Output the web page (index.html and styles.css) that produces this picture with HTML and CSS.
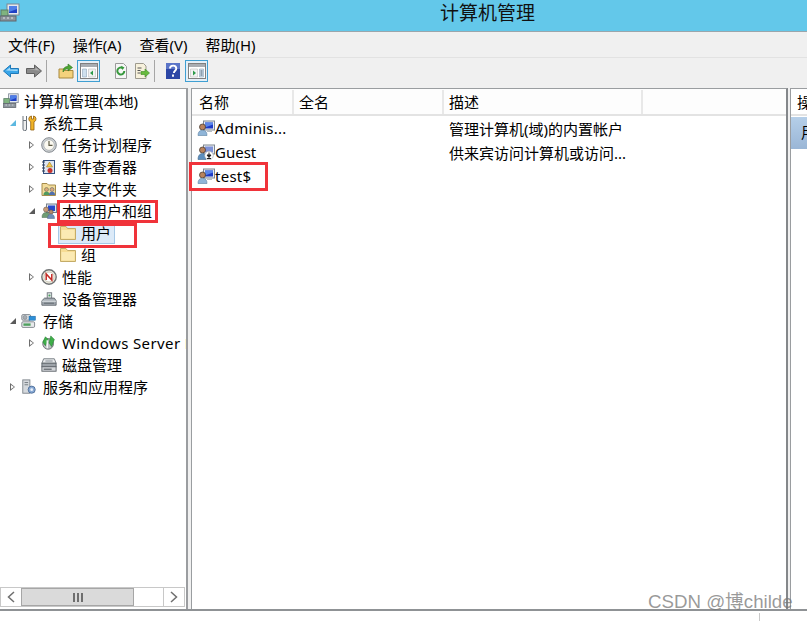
FILE: index.html
```html
<!DOCTYPE html>
<html lang="zh">
<head>
<meta charset="utf-8">
<title>计算机管理</title>
<link rel="stylesheet" href="styles.css">
</head>
<body>
<svg class="defs" width="0" height="0" aria-hidden="true">
  <defs>
    <symbol id="i-comp" viewBox="0 0 20 20">
      <rect x="7" y="1" width="12" height="11" fill="#e4e8ee" stroke="#7d8794"/>
      <rect x="9" y="3" width="8" height="7" fill="#1f3fc4"/>
      <path d="M9 3h8v3l-8 3z" fill="#4f7fe8"/>
      <rect x="1" y="7" width="7" height="6" fill="#7fb37f" stroke="#5c7f68"/>
      <rect x="0" y="13" width="16" height="5" fill="#8c949c" stroke="#5f666d"/>
      <path d="M3 15h2M7 15h2M11 15h2" stroke="#dfe3e6"/>
    </symbol>
    <symbol id="i-tools" viewBox="0 0 16 16">
      <path d="M2 1v4.500M5.500 1v4.500M2 5.500h3.500V14a1.750 1.750 0 0 1-3.500 0z" fill="#eeeeee" stroke="#6c747c"/>
      <path d="M10.500 1a3 3 0 0 0-.8 5.800V15h3.300V6.800A3 3 0 0 0 12.500 1v3h-2z" fill="#f0b429" stroke="#94600c" stroke-width=".8"/>
    </symbol>
    <symbol id="i-clock" viewBox="0 0 16 16">
      <circle cx="8" cy="8" r="7.300" fill="#cfd3d6" stroke="#858a8f"/>
      <circle cx="8" cy="8" r="5.300" fill="#fbf9f0" stroke="#a4a8ab" stroke-width=".7"/>
      <path d="M8 4v4.300h3.500" fill="none" stroke="#5e5a44" stroke-width="1.200"/>
    </symbol>
    <symbol id="i-event" viewBox="0 0 16 16">
      <rect x="2.500" y="1.500" width="11" height="13" fill="#dfe6f2" stroke="#33507f"/>
      <path d="M1 3h3M1 6h3M1 9h3M1 12h3" stroke="#333f55"/>
      <path d="M8.500 3l3 5h-6z" fill="#f5c84a" stroke="#9c7a1c" stroke-width=".6"/>
      <circle cx="9" cy="11.500" r="2.500" fill="#c8322d"/>
    </symbol>
    <symbol id="i-share" viewBox="0 0 16 16">
      <path d="M1 2.500h5l1.500 1.500h7v10.500h-13.500z" fill="#f3dc9a" stroke="#a48b4c"/>
      <circle cx="5.500" cy="8.500" r="2" fill="#d9a878" stroke="#54684f" stroke-width=".5"/>
      <path d="M2.500 14c0-2.500 1-3.300 3-3.300s3 .8 3 3.300z" fill="#4f9a5e"/>
      <circle cx="11" cy="8.500" r="2" fill="#d9a878" stroke="#41557e" stroke-width=".5"/>
      <path d="M8 14c0-2.500 1-3.300 3-3.300s3 .8 3 3.300z" fill="#4f6fae"/>
    </symbol>
    <symbol id="i-group" viewBox="0 0 16 16">
      <rect x="5.500" y="1" width="10" height="8.500" fill="#e2e6ec" stroke="#77808c"/>
      <rect x="7" y="2.500" width="7" height="5.500" fill="#2749cc"/>
      <circle cx="5" cy="6.500" r="2.500" fill="#c89a78" stroke="#5c4d3f" stroke-width=".5"/>
      <path d="M1 14.500c0-3.500 1.500-5 4-5s4 1.500 4 5z" fill="#6f9d73" stroke="#4d6b52" stroke-width=".5"/>
      <circle cx="10" cy="9" r="2.200" fill="#b58a6c" stroke="#4a3f37" stroke-width=".5"/>
      <path d="M6.500 15.500c0-3 1.300-4.300 3.500-4.300s3.500 1.300 3.500 4.300z" fill="#708db8" stroke="#4e6488" stroke-width=".5"/>
    </symbol>
    <symbol id="i-folder" viewBox="0 0 16 16">
      <path d="M.5 1.500h5.500l1.500 2h8v11h-15z" fill="#f6dc94" stroke="#c4ac68"/>
      <path d="M1.500 5h13v8.500h-13z" fill="#fbeab4"/>
    </symbol>
    <symbol id="i-perf" viewBox="0 0 16 16">
      <circle cx="8" cy="8" r="7.200" fill="#f0ede0" stroke="#6f7273" stroke-width="1.400"/>
      <circle cx="8" cy="8" r="5" fill="#fff" stroke="#b8b4a4" stroke-width=".7"/>
      <path d="M5.200 11V5l5.600 6V5" fill="none" stroke="#c42b25" stroke-width="1.500"/>
    </symbol>
    <symbol id="i-device" viewBox="0 0 18 16">
      <rect x="7" y="1" width="5" height="7" fill="#dfe3e6" stroke="#6f767c"/>
      <circle cx="9.500" cy="4" r="1.200" fill="#49a05c"/>
      <path d="M1 10l3-3h11l2 3v5h-16z" fill="#a9b0b7" stroke="#5c6369"/>
      <path d="M1 10.500h16" stroke="#e4e7e9"/>
      <rect x="3" y="12" width="12" height="1.500" fill="#6d747a"/>
    </symbol>
    <symbol id="i-storage" viewBox="0 0 20 18">
      <rect x="1" y="1" width="11" height="7" rx="1.500" fill="#dfe3e6" stroke="#6d747b"/>
      <circle cx="5" cy="4.500" r="2.500" fill="#a8adb2" stroke="#6d747b" stroke-width=".6"/>
      <rect x="10" y="3" width="8" height="5" fill="#2d8fd8" stroke="#1b6098" stroke-width=".6"/>
      <rect x="1" y="10" width="16" height="7" rx="1.500" fill="#e8eaec" stroke="#6d747b"/>
      <rect x="3" y="12" width="9" height="3" fill="#4fa05e"/>
    </symbol>
    <symbol id="i-wsb" viewBox="0 0 18 18">
      <circle cx="8" cy="10" r="6" fill="#b9bcc0" stroke="#6c6f73"/>
      <path d="M5 2l3 3-3 7-3-4zM11 1l4 4-3 8-3-4z" fill="#3fae49" stroke="#1d7a2c" stroke-width=".6"/>
      <path d="M7 6v9" stroke="#fff" stroke-width="1.500"/>
    </symbol>
    <symbol id="i-disk" viewBox="0 0 18 16">
      <path d="M3 1h12l2 5H1z" fill="#e8eaec" stroke="#6f757b"/>
      <ellipse cx="9" cy="3.500" rx="4.500" ry="1.400" fill="#b6bbc0"/>
      <rect x="1" y="6" width="16" height="4" fill="#9ea4aa" stroke="#5c6268"/>
      <rect x="1" y="10" width="16" height="5" fill="#d4d7da" stroke="#5c6268"/>
      <rect x="3" y="12" width="9" height="1.500" fill="#676d73"/>
    </symbol>
    <symbol id="i-svc" viewBox="0 0 18 18">
      <rect x="2" y="1" width="8" height="15" fill="#d5d9dd" stroke="#7b8288"/>
      <path d="M4 4h4M4 6.500h4" stroke="#6b7278"/>
      <circle cx="12" cy="12" r="4" fill="#88a9d4" stroke="#4c6c97"/>
      <circle cx="12" cy="12" r="1.500" fill="#eef3fa"/>
    </symbol>
    <symbol id="i-user" viewBox="0 0 18 16">
      <rect x="6.500" y="1" width="11" height="9" fill="#e8ebf0" stroke="#7e8792"/>
      <rect x="8" y="2.500" width="8" height="6" fill="#1c3ac6"/>
      <path d="M8 2.500h8v2l-8 3z" fill="#5a85ea"/>
      <path d="M10 10.500h5v1.500h-5z" fill="#b7bcc2"/>
      <circle cx="5.500" cy="7" r="3" fill="#b9835d" stroke="#3c3029" stroke-width=".7"/>
      <path d="M1 15.500c0-3.500 1.500-5.200 4.500-5.200s4.500 1.700 4.500 5.200z" fill="#8fb5d8" stroke="#5b81a3" stroke-width=".6"/>
    </symbol>
    <symbol id="i-guest" viewBox="0 0 18 16">
      <rect x="6.500" y="1" width="11" height="9" fill="#e8ebf0" stroke="#7e8792"/>
      <rect x="8" y="2.500" width="8" height="6" fill="#7d91d8"/>
      <circle cx="5.500" cy="6" r="3" fill="#b9835d" stroke="#3c3029" stroke-width=".7"/>
      <path d="M1 15.500c0-3.500 1.500-6 4.500-6s3.500 2 3.500 6z" fill="#5c8fbf" stroke="#46688a" stroke-width=".6"/>
      <circle cx="12" cy="11.500" r="4.300" fill="#fff" stroke="#9aa1a8" stroke-width=".6"/>
      <path d="M12 8.500v4M10 11l2 2.500 2-2.500zM10 14.500h4" stroke="#222" fill="#222"/>
    </symbol>
  </defs>
</svg>

<header class="titlebar">
  <svg class="title-icon"><use href="#i-comp"/></svg>
  <div class="title-text">计算机管理</div>
</header>

<nav class="menubar">
  <span class="menu-item">文件(F)</span>
  <span class="menu-item">操作(A)</span>
  <span class="menu-item">查看(V)</span>
  <span class="menu-item">帮助(H)</span>
</nav>

<div class="toolbar">
  <svg class="tb-icon tb-back" viewBox="0 0 16 16"><path d="M.5 8l7-6v3.500h8v5h-8V14z" fill="#38a5e8" stroke="#1f79b8"/><path d="M3 7.500l4-3v2h7.500v1.500z" fill="#a6dcfa"/></svg>
  <svg class="tb-icon tb-forward" viewBox="0 0 16 16"><path d="M15.500 8l-7-6v3.500h-8v5h8V14z" fill="#8a8a8a" stroke="#606060"/><path d="M1.500 6.500h8v-2l4 3z" fill="#b4b4b4"/></svg>
  <span class="tb-sep tb-sep-a"></span>
  <svg class="tb-icon tb-up" viewBox="0 0 16 16"><path d="M1 6h5l1 1.500h8v7.500h-14z" fill="#f4d27c" stroke="#a8893f"/><path d="M5 9c0-4 2-5.500 5-5.500V1l4.500 3.500L10 8V5.800C8 5.800 6.500 7 5 9z" fill="#4fa834" stroke="#2f7420" stroke-width=".6"/></svg>
  <span class="tb-btn tb-btn-a">
    <svg class="tb-pane" viewBox="0 0 18 16"><rect x=".5" y=".5" width="17" height="15" fill="#fff" stroke="#7f7f7f"/><rect x="1" y="1" width="16" height="3" fill="#a9adb2"/><path d="M2.500 6h4v8h-4z" fill="#cfe0ee" stroke="#8fa5b8" stroke-width=".6"/><path d="M8.500 6h7v8h-7z" fill="#f2f2f2" stroke="#bdbdbd" stroke-width=".6"/><path d="M13 7.500v5l-3-2.500z" fill="#2d9a4a"/></svg>
  </span>
  <svg class="tb-icon tb-refresh" viewBox="0 0 16 16"><path d="M2.500.5h8l3 3v12h-11z" fill="#f6f6f6" stroke="#9a9a9a"/><path d="M11.300 8a3.500 3.500 0 1 1-1.500-2.900" fill="none" stroke="#37983d" stroke-width="2"/><path d="M8 2.800l3.500 1.700-2.200 2.600z" fill="#37983d"/></svg>
  <svg class="tb-icon tb-export" viewBox="0 0 16 16"><path d="M1.500.5h8l2.500 2.500v12.500h-10.500z" fill="#f7f1dc" stroke="#9d9a8e"/><path d="M3.500 5h4M3.500 7.500h3M3.500 10h3" stroke="#555"/><path d="M7 8.500h4V6l4.500 4-4.500 4v-2.500H7z" fill="#68bb3d" stroke="#3e8a25" stroke-width=".6"/></svg>
  <span class="tb-sep tb-sep-b"></span>
  <svg class="tb-icon tb-help" viewBox="0 0 14 16"><rect width="14" height="16" fill="#2c46a6"/><rect x="0" y="0" width="14" height="6" fill="#5a74c8"/><path d="M4 5.500c0-3.800 6.300-3.800 6.300 0 0 2.300-2.400 2.300-2.400 4.500M7 11.500v2.300" fill="none" stroke="#fff" stroke-width="1.900"/></svg>
  <span class="tb-btn tb-btn-b">
    <svg class="tb-pane" viewBox="0 0 18 16"><rect x=".5" y=".5" width="17" height="15" fill="#fff" stroke="#7f7f7f"/><rect x="1" y="1" width="16" height="3" fill="#a9adb2"/><path d="M2.500 6h7v8h-7z" fill="#f2f2f2" stroke="#bdbdbd" stroke-width=".6"/><path d="M11.500 6h4v8h-4z" fill="#cfe0ee" stroke="#8fa5b8" stroke-width=".6"/><path d="M5 7.500v5l3-2.500z" fill="#2d9a4a"/><path d="M12.500 8h2M12.500 10h2M12.500 12h2" stroke="#4d5d6c"/></svg>
  </span>
</div>

<main class="panes">
  <aside class="tree-pane">
    <ul class="tree">
      <li class="row l0"><svg class="ti"><use href="#i-comp"/></svg><span class="lbl">计算机管理(本地)</span></li>
      <li class="row l1"><span class="tg open-blue"></span><svg class="ti"><use href="#i-tools"/></svg><span class="lbl">系统工具</span></li>
      <li class="row l2"><span class="tg closed"></span><svg class="ti"><use href="#i-clock"/></svg><span class="lbl">任务计划程序</span></li>
      <li class="row l2"><span class="tg closed"></span><svg class="ti"><use href="#i-event"/></svg><span class="lbl">事件查看器</span></li>
      <li class="row l2"><span class="tg closed"></span><svg class="ti"><use href="#i-share"/></svg><span class="lbl">共享文件夹</span></li>
      <li class="row l2"><span class="tg open"></span><svg class="ti"><use href="#i-group"/></svg><span class="lbl">本地用户和组</span></li>
      <li class="row l3"><span class="sel"><svg class="ti"><use href="#i-folder"/></svg><span class="lbl">用户</span></span></li>
      <li class="row l3"><span class="unsel"><svg class="ti"><use href="#i-folder"/></svg><span class="lbl">组</span></span></li>
      <li class="row l2"><span class="tg closed"></span><svg class="ti"><use href="#i-perf"/></svg><span class="lbl">性能</span></li>
      <li class="row l2"><span class="tg"></span><svg class="ti"><use href="#i-device"/></svg><span class="lbl">设备管理器</span></li>
      <li class="row l1"><span class="tg open"></span><svg class="ti"><use href="#i-storage"/></svg><span class="lbl">存储</span></li>
      <li class="row l2"><span class="tg closed"></span><svg class="ti"><use href="#i-wsb"/></svg><span class="lbl wide">Windows Server Backup</span></li>
      <li class="row l2"><span class="tg"></span><svg class="ti"><use href="#i-disk"/></svg><span class="lbl">磁盘管理</span></li>
      <li class="row l1"><span class="tg closed"></span><svg class="ti"><use href="#i-svc"/></svg><span class="lbl">服务和应用程序</span></li>
    </ul>
    <div class="hscroll">
      <span class="sb-btn"><svg class="chev" viewBox="0 0 8 12"><path d="M7 1L1.500 6 7 11" fill="none" stroke="#6f6f6f" stroke-width="1.500"/></svg></span>
      <span class="sb-thumb"><span class="grip"></span><span class="grip"></span><span class="grip"></span></span>
      <span class="sb-track"></span>
      <span class="sb-btn"><svg class="chev" viewBox="0 0 8 12"><path d="M1 1l5.500 5L1 11" fill="none" stroke="#6f6f6f" stroke-width="1.500"/></svg></span>
    </div>
  </aside>

  <section class="list-pane">
    <div class="list-head">
      <span class="col c1">名称</span>
      <span class="col c2">全名</span>
      <span class="col c3">描述</span>
    </div>
    <div class="list-row">
      <span class="cell c1 tight"><svg class="ui"><use href="#i-user"/></svg>Adminis...</span>
      <span class="cell c2"></span>
      <span class="cell c3">管理计算机(域)的内置帐户</span>
    </div>
    <div class="list-row">
      <span class="cell c1"><svg class="ui"><use href="#i-guest"/></svg>Guest</span>
      <span class="cell c2"></span>
      <span class="cell c3">供来宾访问计算机或访问...</span>
    </div>
    <div class="list-row">
      <span class="cell c1 tight"><svg class="ui"><use href="#i-user"/></svg>test$</span>
      <span class="cell c2"></span>
      <span class="cell c3"></span>
    </div>
  </section>

  <aside class="action-pane">
    <div class="action-head">操作</div>
    <div class="action-item">用户</div>
  </aside>
</main>

<div class="footer-strip"><span class="footer-tick"></span></div>

<span class="mark mark-a"></span>
<span class="mark mark-b"></span>
<span class="mark mark-c"></span>
<span class="watermark">CSDN @博childe</span>
</body>
</html>
```
FILE: styles.css
```css
* { box-sizing: border-box; }
html, body { margin: 0; padding: 0; }
body {
  position: relative;
  width: 807px;
  height: 621px;
  overflow: hidden;
  background: #fff;
  color: #000;
  font-family: "Noto Sans", "Noto Sans CJK SC", sans-serif;
  font-size: 15px;
}
.defs { position: absolute; }

.titlebar {
  height: 32px;
  background: #63c8ea;
  border-bottom: 1px solid #9aa6ac;
  display: flex;
  align-items: flex-start;
}
.title-icon { width: 20px; height: 20px; margin-top: 3px; }
.title-text {
  margin-left: 420px;
  font-size: 19px;
  line-height: 26px;
  color: #111;
}

.menubar {
  height: 26px;
  background: #f0f0f0;
  display: flex;
  align-items: center;
  padding-left: 8px;
  gap: 18px;
  border-bottom: 1px solid #e2e2e2;
}
.menu-item { line-height: 26px; }

.toolbar {
  height: 30px;
  padding: 0 0 4px 3px;
  background: #f0f0f0;
  display: flex;
  align-items: center;
}
.tb-icon { width: 16px; height: 16px; flex: none; }
.tb-forward { margin-left: 7px; }
.tb-sep { width: 1px; height: 22px; background: #a6a6a6; flex: none; }
.tb-sep-a { margin-left: 4px; }
.tb-up { margin-left: 11px; }
.tb-btn {
  width: 23px;
  height: 22px;
  border: 1px solid #3f9fd2;
  background: #e4eff7;
  display: flex;
  align-items: center;
  justify-content: center;
  flex: none;
}
.tb-btn-a { margin-left: 3px; }
.tb-btn-b { margin-left: 5px; }
.tb-pane { width: 18px; height: 16px; }
.tb-refresh { margin-left: 13px; }
.tb-export { margin-left: 5px; }
.tb-sep-b { margin-left: 4px; }
.tb-help { margin-left: 11px; width: 14px; }

.panes {
  height: 523px;
  background: #f0f0f0;
  display: flex;
  border-bottom: 2px solid #8f9295;
}

.tree-pane {
  width: 188px;
  flex: none;
  background: #fff;
  border-top: 1px solid #a0a0a0;
  border-right: 2px solid #9b9da0;
  display: flex;
  flex-direction: column;
  overflow: hidden;
  padding-top: 1px;
}
.tree {
  list-style: none;
  margin: 0;
  padding: 0;
  flex: 1;
  overflow: hidden;
}
.row {
  height: 22px;
  display: flex;
  align-items: center;
  white-space: nowrap;
}
.row.l0 { padding-left: 3px; }
.row.l1 { padding-left: 10px; }
.row.l2 { padding-left: 29px; }
.row.l3 { padding-left: 58px; }
.tg {
  width: 11px;
  height: 9px;
  flex: none;
  position: relative;
}
.l2 .tg { width: 12px; }
.tg.closed::before {
  content: "";
  position: absolute;
  left: 0;
  top: 0;
  border-left: 5px solid #6d6d6d;
  border-top: 4.5px solid transparent;
  border-bottom: 4.5px solid transparent;
}
.tg.closed::after {
  content: "";
  position: absolute;
  left: 1px;
  top: 2px;
  border-left: 3px solid #fff;
  border-top: 2.5px solid transparent;
  border-bottom: 2.5px solid transparent;
}
.tg.open::before,
.tg.open-blue::before {
  content: "";
  position: absolute;
  left: 0;
  top: 1px;
  width: 0;
  height: 0;
  border-right: 6px solid #5a5a5a;
  border-top: 6px solid transparent;
}
.tg.open-blue::before {
  border-right: 6px solid #5cb8e0;
}
.ti { width: 16px; height: 16px; flex: none; margin-right: 5px; }
.l1 .ti { margin-right: 6px; }
.lbl { line-height: 22px; }
.wide { letter-spacing: .38px; }
.sel, .unsel {
  display: flex;
  align-items: center;
  height: 21px;
  padding: 0 3px 0 1px;
  border: 1px solid transparent;
}
.sel { background: #dceaf8; border-color: #a6c8e6; }

.hscroll {
  height: 20px;
  margin-bottom: 2px;
  margin-right: 1px;
  display: flex;
  background: #fff;
  border: 1px solid #c8c8c8;
}
.sb-btn {
  width: 20px;
  flex: none;
  display: flex;
  align-items: center;
  justify-content: center;
}
.chev { width: 8px; height: 12px; }
.sb-thumb {
  width: 113px;
  flex: none;
  background: #dadada;
  border: 1px solid #a6a6a6;
  display: flex;
  align-items: center;
  justify-content: center;
  gap: 2px;
}
.grip { width: 2px; height: 9px; background: #6e6e6e; }
.sb-track { flex: 1; border-right: 1px solid #c8c8c8; }

.list-pane {
  width: 597px;
  flex: none;
  margin-left: 3px;
  background: #fff;
  border-top: 1px solid #9a9da0;
  border-right: 2px solid #84878a;
  border-left: 1px solid #9a9da0;
}
.list-head {
  height: 27px;
  padding-top: 1px;
  display: flex;
  background: #fdfdfd;
  border-bottom: 2px solid #e3e3e3;
}
.col {
  line-height: 25px;
  padding-left: 5px;
  border-right: 2px solid #e8e8e8;
}
.col.c1 { width: 102px; padding-left: 7px; }
.col.c2 { width: 150px; }
.col.c3 { width: 199px; }
.list-row {
  height: 24px;
  display: flex;
  align-items: center;
}
.cell { white-space: nowrap; display: flex; align-items: center; }
.cell.c1 { width: 102px; padding-left: 5px; }
.cell.c2 { width: 150px; }
.cell.c3 { width: 199px; padding-left: 5px; }
.cell.tight { letter-spacing: .25px; }
.ui { width: 18px; height: 16px; flex: none; }

.action-pane {
  margin-left: 2px;
  flex: 1;
  background: #fff;
  border-top: 1px solid #9a9da0;
  border-left: 1px solid #9a9da0;
  overflow: hidden;
}
.action-head {
  height: 27px;
  padding-left: 6px;
  line-height: 27px;
  white-space: nowrap;
  border-bottom: 2px solid #e3e3e3;
}
.action-item {
  height: 32px;
  margin-top: 1px;
  padding-left: 10px;
  line-height: 30px;
  white-space: nowrap;
  background: linear-gradient(#b5cfe9, #9ab6d6);
}

.footer-strip { height: 10px; position: relative; }
.footer-tick {
  position: absolute;
  left: 759px;
  top: 2px;
  width: 1px;
  height: 8px;
  background: #c9c9c9;
}

.mark { position: absolute; border: 3px solid #f0333a; }
.mark-a { left: 57px; top: 200px; width: 101px; height: 23px; }
.mark-b { left: 48px; top: 223px; width: 89px; height: 25px; }
.mark-c { left: 189px; top: 162px; width: 79px; height: 29px; }

.watermark {
  position: absolute;
  left: 648px;
  top: 589px;
  font-family: "Liberation Sans", "Noto Sans CJK SC", sans-serif;
  font-size: 18.7px;
  line-height: 26px;
  color: rgba(120, 120, 120, .75);
  white-space: nowrap;
}
```
